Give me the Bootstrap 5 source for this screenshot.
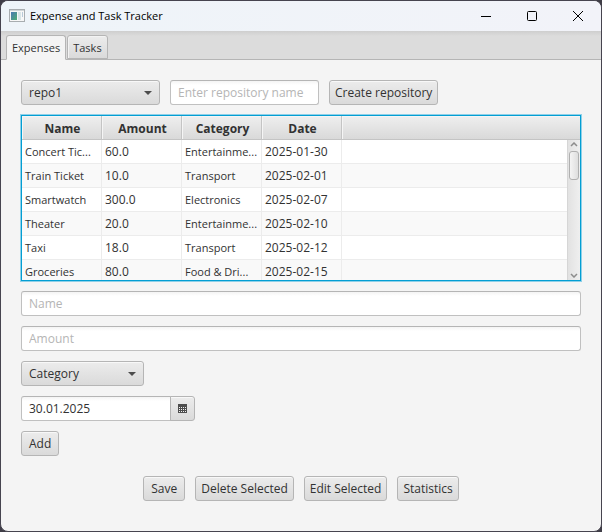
<!DOCTYPE html>
<html lang="en">
<head>
<meta charset="utf-8">
<meta name="viewport" content="width=device-width, initial-scale=1">
<title>Expense and Task Tracker</title>
<link rel="stylesheet" href="https://cdn.jsdelivr.net/npm/bootstrap@5.3.0/dist/css/bootstrap.min.css">
<style>
  body { background: #3f3d47; color: #323232; font-family: "Open Sans", "Noto Sans", sans-serif; font-size: 12px; line-height: 16px; }
  .app-window { background: #f4f4f4; border: 1px solid #46444f; border-radius: 8px; min-height: 100vh; overflow: hidden; }
  .title-bar { background: linear-gradient(90deg, #eef4f9, #f2f3f9); height: 30px; color: #000; padding-left: 8px; }
  .title-bar h1 { font-size: 11px; line-height: 16px; margin-left: 5px; }
  .caption-btn { width: 46px; height: 30px; background: none; border: 0; padding: 0; color: #000; }
  .tab-strip { height: 29px; padding: 0 5px; gap: 1px; border-bottom: 1px solid #b5b5b5; background: linear-gradient(#cecece, #dcdcdc 5px); }
  .tab-strip .nav-link { height: 24px; padding: 3px 5px; font-size: 11px; line-height: 18px; color: #323232; border: 1px solid #b5b5b5; border-radius: 3px 3px 0 0; background: linear-gradient(#ececec, #dadada); box-shadow: inset 1px 1px #f3f3f3; }
  .tab-strip .nav-link.active { height: 25px; margin-bottom: -1px; color: #323232; background: #f4f4f4; border-color: #b5b5b5; border-bottom-color: #f4f4f4; }
  .tab-page { padding: 20px; gap: 10px; }
  .control-row { gap: 10px; }
  .fx-btn, .fx-combo select { height: 25px; font-size: 12px; line-height: 16px; color: #323232; border: 1px solid #b5b5b5; border-radius: 3px; background: linear-gradient(#ececec, #dadada); box-shadow: inset 0 1px #f8f8f8; }
  .fx-btn { padding: 3px 7px; }
  .fx-btn-wide { padding: 3px 5px; }
  .fx-btn:hover { border-color: #b5b5b5; background: linear-gradient(#f4f4f4, #e2e2e2); }
  .fx-combo { display: grid; align-items: center; }
  .fx-combo select { grid-area: 1 / 1; width: 100%; appearance: none; padding: 0 24px 0 7px; }
  .fx-combo svg { grid-area: 1 / 1; justify-self: end; margin-right: 8px; pointer-events: none; }
  .fx-input { height: 25px; padding: 3px 7px; font-size: 12px; line-height: 16px; color: #323232; border: 1px solid #c0c0c0; border-top-color: #b5b5b5; border-radius: 3px; background: linear-gradient(#f4f4f4, #fff 4px); }
  .fx-input::placeholder { color: #b5b5b5; }
  .combo-repo { width: 139px; }
  .input-repo { width: 149px; }
  .combo-category { width: 123px; }
  .date-picker { width: 174px; }
  .date-picker .fx-btn { width: 25px; padding: 0; border-radius: 0 3px 3px 0; }
  .grid-view { height: 166px; border: 1px solid #039ed3; box-shadow: 0 0 0 1px #8fd0e8; background: #fff; }
  .expense-grid { table-layout: fixed; width: 100%; color: #323232; border-collapse: separate; border-spacing: 0; }
  .expense-grid th, .expense-grid td { height: 24px; line-height: 16px; padding: 3px 0 3px 3px; white-space: nowrap; border-right: 1px solid #ececec; border-bottom: 1px solid #ececec; }
  .expense-grid td:nth-child(1), .expense-grid td:nth-child(3) { font-size: 11px; }
  .expense-grid th { padding: 4px 0 2px 2px; text-align: center; font-weight: 700; border-color: #c4c4c4; background: linear-gradient(#efefef, #d9d9d9); box-shadow: inset 1px 1px #f5f5f5; }
  .expense-grid tr > :last-child { border-right: 0; }
  .expense-grid tbody tr:nth-child(even) { background: #f9f9f9; }
  .col-data { width: 80px; }
  .scroll-track { top: 24px; right: 0; bottom: 0; width: 13px; padding: 2px 1px; border-left: 1px solid #d6d6d6; background: linear-gradient(90deg, #e2e2e2, #efefef); }
  .scroll-thumb { width: 10px; height: 29px; margin-top: 4px; border: 1px solid #b0b0b0; border-radius: 3px; background: linear-gradient(90deg, #f4f4f4, #dedede); }
  .action-row { margin-top: 10px; }
</style>
<script src="https://cdn.jsdelivr.net/npm/bootstrap@5.3.0/dist/js/bootstrap.bundle.min.js"></script>
</head>
<body>
<div class="app-window">
  <header class="title-bar d-flex align-items-center">
    <svg width="16" height="14" viewBox="0 0 16 14" aria-hidden="true">
      <defs><linearGradient id="pane" x2="1" y2="1"><stop stop-color="#4b79b4"/><stop offset="1" stop-color="#4fad72"/></linearGradient></defs>
      <rect x=".5" y=".5" width="15" height="12" fill="#f7f7f7" stroke="#a8adb0"/>
      <path d="M1 1.500h14" stroke="#d0d5d7"/>
      <rect x="2" y="3" width="6" height="8" fill="url(#pane)"/>
      <rect x="9" y="3" width="3" height="8" fill="#d8e5e7"/>
      <rect x="13" y="3" width="1" height="5" fill="#b8cad8"/>
    </svg>
    <h1 class="fw-normal mb-0 me-auto">Expense and Task Tracker</h1>
    <button class="caption-btn" aria-label="Minimize"><svg width="12" height="12" fill="none" stroke="currentColor"><path d="M1 5.500h10"/></svg></button>
    <button class="caption-btn" aria-label="Maximize"><svg width="12" height="12" fill="none" stroke="currentColor"><rect x="1.500" y=".5" width="9" height="9" rx="1"/></svg></button>
    <button class="caption-btn" aria-label="Close"><svg width="12" height="12" fill="none" stroke="currentColor"><path d="M1 0l10 10M11 0L1 10"/></svg></button>
  </header>
  <nav class="tab-strip nav align-items-end" role="tablist">
    <a class="nav-link active" href="#expenses" role="tab" aria-selected="true">Expenses</a>
    <a class="nav-link" href="#tasks" role="tab" aria-selected="false">Tasks</a>
  </nav>
  <main id="expenses" class="tab-page d-flex flex-column align-items-start">
    <div class="control-row d-flex flex-wrap">
      <div class="fx-combo combo-repo">
        <select aria-label="Repository"><option>repo1</option></select>
        <svg width="8" height="4"><path d="M0 0h8L4 4z" fill="#4d4d4d"/></svg>
      </div>
      <input class="form-control fx-input input-repo" type="text" placeholder="Enter repository name" aria-label="Repository name">
      <button class="btn fx-btn fx-btn-wide">Create repository</button>
    </div>
    <div class="grid-view position-relative overflow-hidden w-100">
      <table class="expense-grid">
        <colgroup><col class="col-data"><col class="col-data"><col class="col-data"><col class="col-data"><col></colgroup>
        <thead><tr><th scope="col">Name</th><th scope="col">Amount</th><th scope="col">Category</th><th scope="col">Date</th><th></th></tr></thead>
        <tbody>
          <tr><td>Concert Tic...</td><td>60.0</td><td>Entertainme...</td><td>2025-01-30</td><td></td></tr>
          <tr><td>Train Ticket</td><td>10.0</td><td>Transport</td><td>2025-02-01</td><td></td></tr>
          <tr><td>Smartwatch</td><td>300.0</td><td>Electronics</td><td>2025-02-07</td><td></td></tr>
          <tr><td>Theater</td><td>20.0</td><td>Entertainme...</td><td>2025-02-10</td><td></td></tr>
          <tr><td>Taxi</td><td>18.0</td><td>Transport</td><td>2025-02-12</td><td></td></tr>
          <tr><td>Groceries</td><td>80.0</td><td>Food &amp; Dri...</td><td>2025-02-15</td><td></td></tr>
        </tbody>
      </table>
      <div class="scroll-track position-absolute d-flex flex-column align-items-center" aria-hidden="true">
        <svg class="flex-shrink-0" width="8" height="5" fill="none" stroke="#8c8c8c" stroke-width="1.500"><path d="M1 4l3-3 3 3"/></svg>
        <div class="scroll-thumb"></div>
        <svg class="flex-shrink-0 mt-auto" width="8" height="5" fill="none" stroke="#8c8c8c" stroke-width="1.500"><path d="M1 1l3 3 3-3"/></svg>
      </div>
    </div>
    <input class="form-control fx-input" type="text" placeholder="Name" aria-label="Name">
    <input class="form-control fx-input" type="text" placeholder="Amount" aria-label="Amount">
    <div class="fx-combo combo-category">
      <select aria-label="Category"><option>Category</option></select>
      <svg width="8" height="4"><path d="M0 0h8L4 4z" fill="#4d4d4d"/></svg>
    </div>
    <div class="input-group date-picker">
      <input class="form-control fx-input" type="text" value="30.01.2025" aria-label="Date">
      <button class="btn fx-btn d-flex align-items-center justify-content-center" aria-label="Open calendar">
        <svg width="9" height="9" shape-rendering="crispEdges"><path d="M0 0h9v9H0z" fill="#4d4d4d"/><path d="M1 3.500h7M1 5.500h7M1 7.500h7" stroke="#f0f0f0" stroke-dasharray="1 1"/></svg>
      </button>
    </div>
    <button class="btn fx-btn">Add</button>
    <div class="action-row control-row d-flex flex-wrap justify-content-center w-100">
      <button class="btn fx-btn">Save</button>
      <button class="btn fx-btn fx-btn-wide">Delete Selected</button>
      <button class="btn fx-btn fx-btn-wide">Edit Selected</button>
      <button class="btn fx-btn fx-btn-wide">Statistics</button>
    </div>
  </main>
</div>
</body>
</html>
